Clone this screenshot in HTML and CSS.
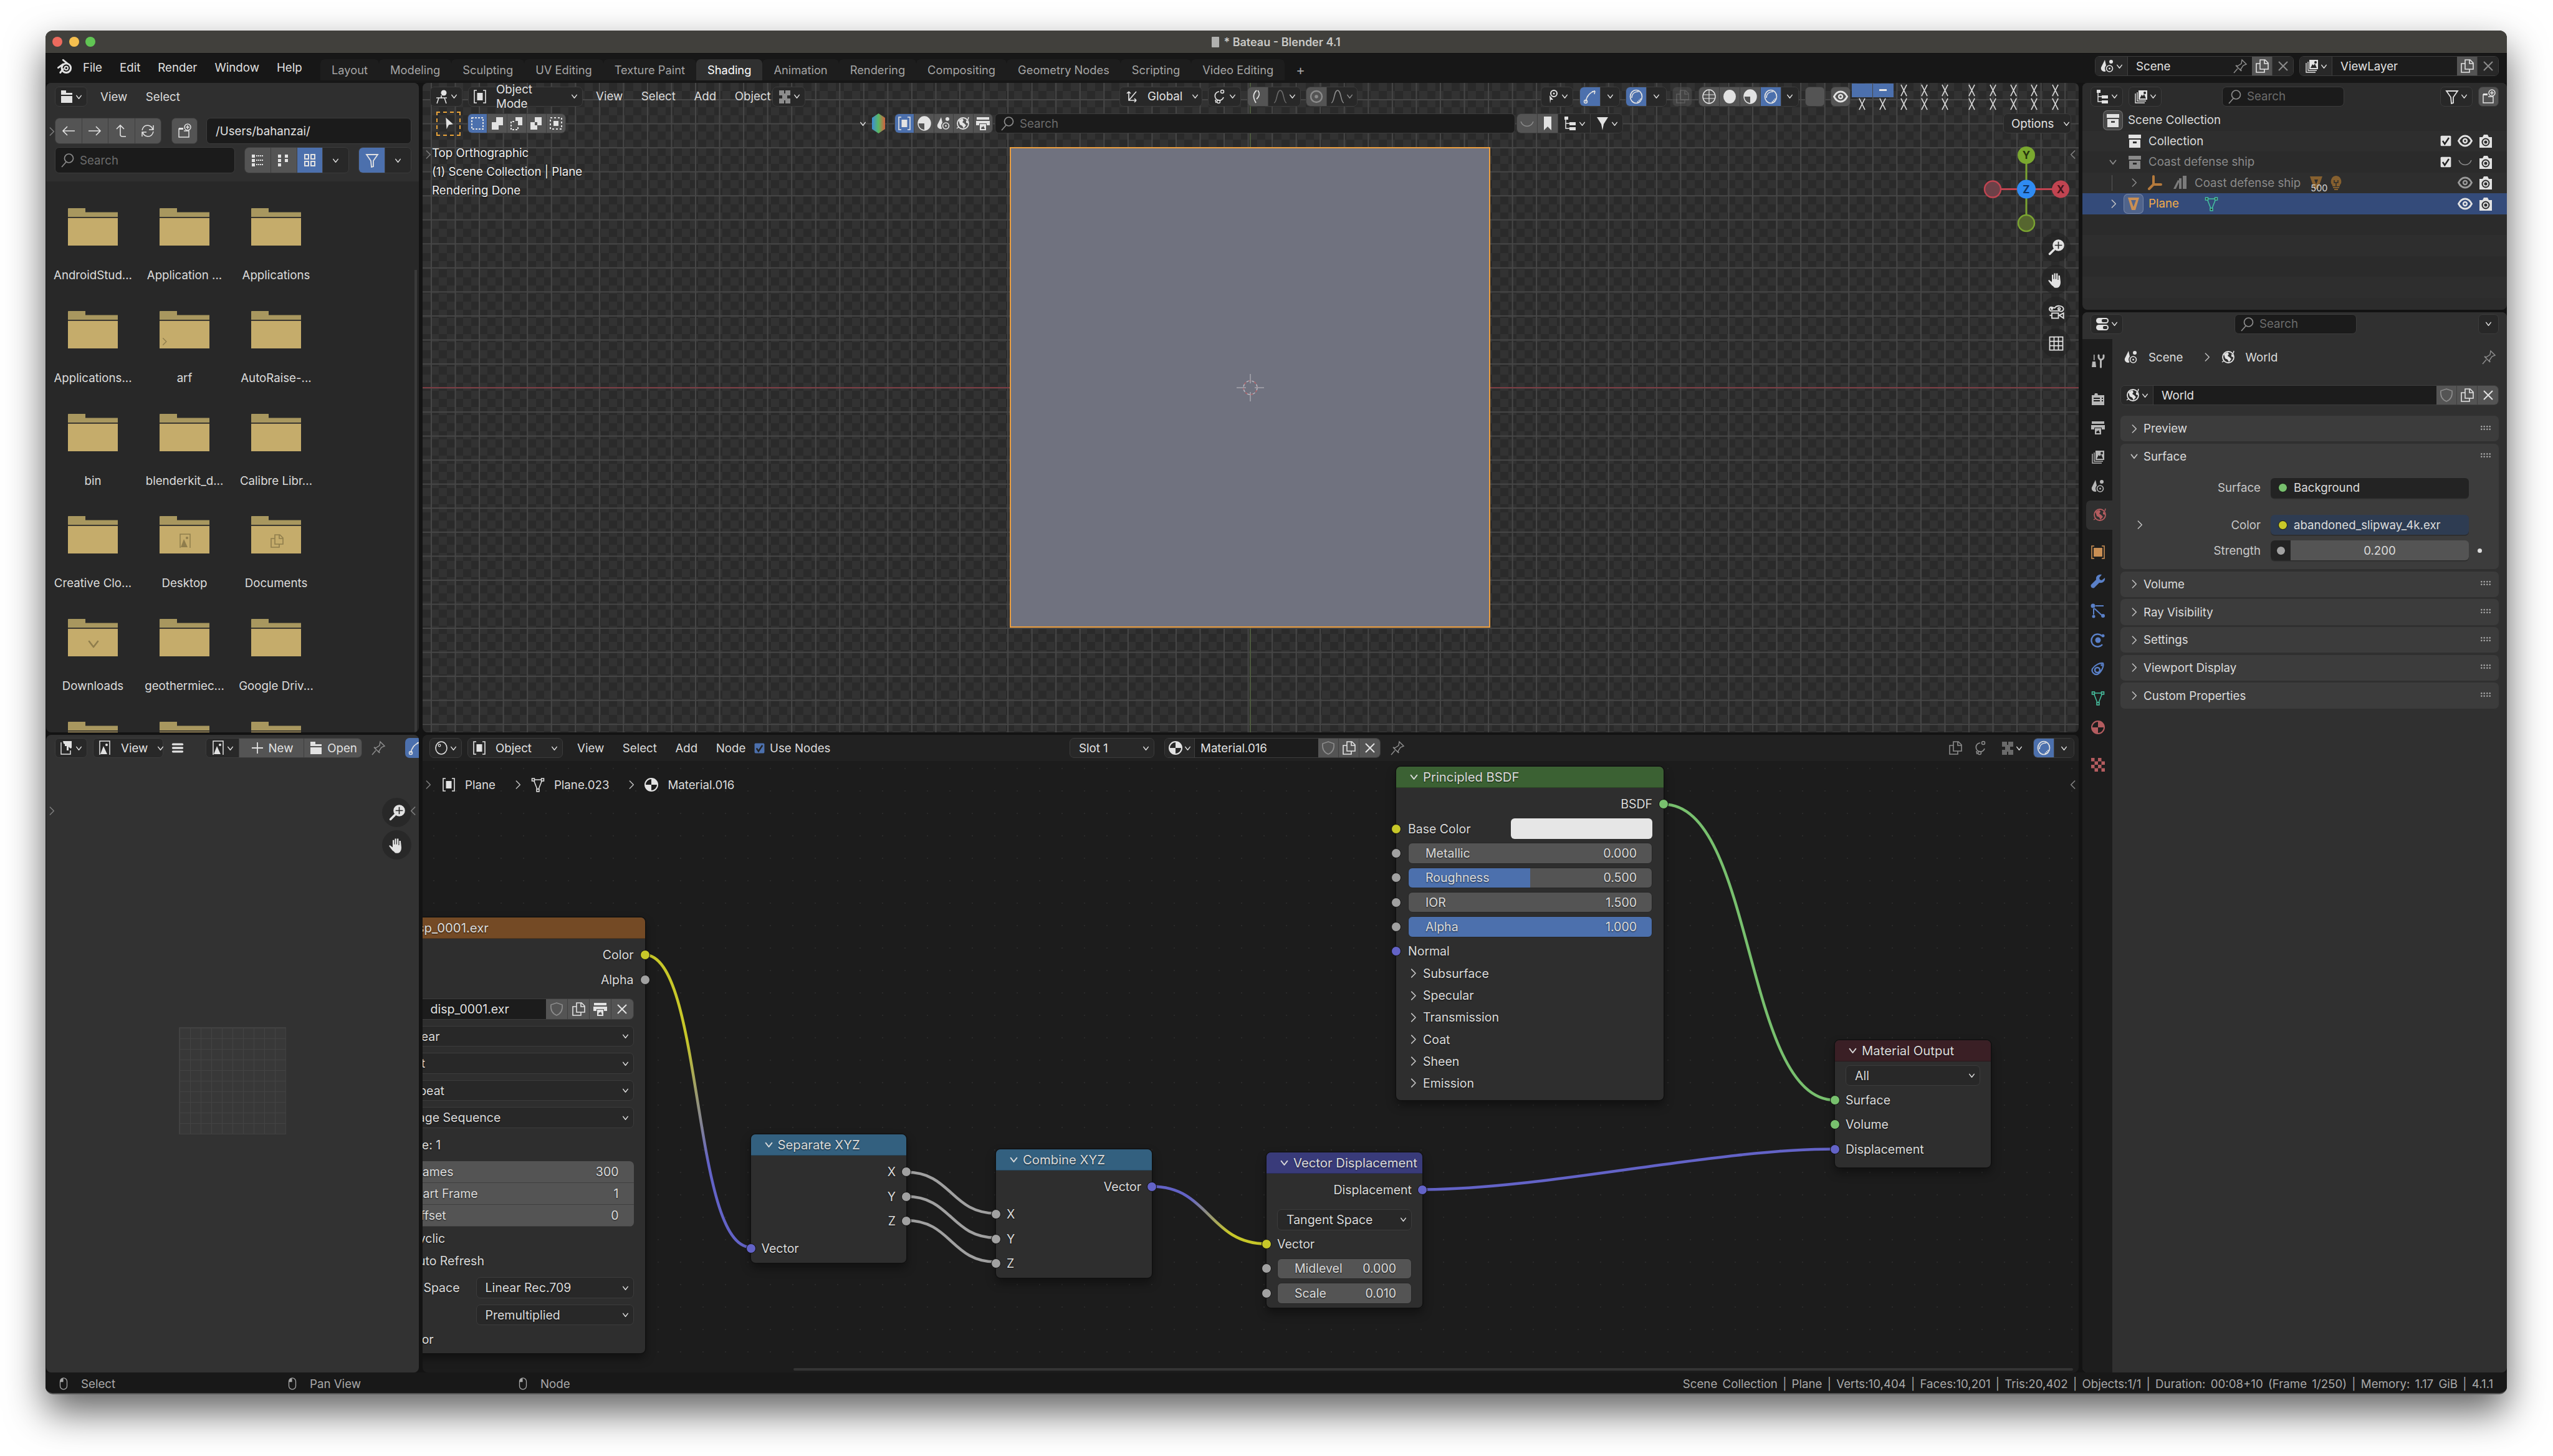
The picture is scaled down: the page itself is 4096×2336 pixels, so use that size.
FILE: index.html
```html
<!DOCTYPE html>
<html lang="en">

<head>
    <meta charset="UTF-8">
    <title>* Bateau - Blender 4.1</title>
    <link rel="stylesheet" href="styles.css">
</head>

<body>
    <!-- icon set -->
    <svg class="defs" aria-hidden="true">
        <symbol id="chd" viewBox="0 0 24 24"><path d="M5 8l7 9 7-9" fill="none" stroke="currentColor" stroke-width="2.6" stroke-linecap="round" stroke-linejoin="round"/></symbol>
        <symbol id="chr" viewBox="0 0 24 24"><path d="M8 3l9 9-9 9" fill="none" stroke="currentColor" stroke-width="2.2" stroke-linecap="round" stroke-linejoin="round"/></symbol>
        <symbol id="chl" viewBox="0 0 24 24"><path d="M16 3l-9 9 9 9" fill="none" stroke="currentColor" stroke-width="2.6" stroke-linecap="round" stroke-linejoin="round"/></symbol>
        <symbol id="logo" viewBox="0 0 24 24"><g fill="none" stroke="currentColor"><circle cx="14.5" cy="13.5" r="6.5" stroke-width="2.6"/><circle cx="14.5" cy="13.5" r="2.4" stroke-width="1.8"/><path d="M3 13l7-5M10 2l6 5M6 20l4-5" stroke-width="2.6" stroke-linecap="round"/></g></symbol>
        <symbol id="folder" viewBox="0 0 24 24"><path fill="currentColor" d="M3 2h8v4h10v3H3zM3 11h18v11H3z"/></symbol>
        <symbol id="view3d" viewBox="0 0 24 24"><circle cx="15" cy="6" r="4.5" fill="currentColor"/><path d="M3 14h17M7 14l-3 9M16 14l3 9M11 10v5" fill="none" stroke="currentColor" stroke-width="1.6"/></symbol>
        <symbol id="objm" viewBox="0 0 24 24"><path d="M7 2H3v20h4M17 2h4v20h-4" fill="none" stroke="currentColor" stroke-width="1.6"/><rect x="7.5" y="6" width="9" height="12" fill="currentColor"/></symbol>
        <symbol id="arl" viewBox="0 0 24 24"><path d="M22 12H3M10 5l-7 7 7 7" fill="none" stroke="currentColor" stroke-width="1.6"/></symbol>
        <symbol id="arr" viewBox="0 0 24 24"><path d="M2 12h19M14 5l7 7-7 7" fill="none" stroke="currentColor" stroke-width="1.6"/></symbol>
        <symbol id="aru" viewBox="0 0 24 24"><path d="M10 3v15c0 3 2 3 4 3h5M4 9l6-6 6 6" fill="none" stroke="currentColor" stroke-width="1.6"/></symbol>
        <symbol id="refr" viewBox="0 0 24 24"><path d="M20 10A8.5 8.5 0 0 0 4 8l-1 3M4 14a8.500 8.500 0 0 0 16 2l1-3M14 10h7V3M10 14H3v7" fill="none" stroke="currentColor" stroke-width="1.5"/></symbol>
        <symbol id="newf" viewBox="0 0 24 24"><path d="M3 8h6M3 8v14h16V12H11" fill="none" stroke="currentColor" stroke-width="1.5"/><rect x="3" y="7" width="7" height="3" fill="currentColor"/><circle cx="17" cy="6" r="5" fill="none" stroke="currentColor" stroke-width="1.5"/><path d="M17 3v6M14 6h6" stroke="currentColor" stroke-width="1.6"/></symbol>
        <symbol id="search" viewBox="0 0 24 24"><circle cx="14.500" cy="9" r="7" fill="none" stroke="currentColor" stroke-width="1.7"/><path d="M10 15l-7 8" stroke="currentColor" stroke-width="1.7"/></symbol>
        <symbol id="lists" viewBox="0 0 24 24"><g fill="currentColor"><rect x="3" y="3" width="5" height="5"/><rect x="3" y="10" width="5" height="5"/><rect x="3" y="17" width="5" height="5"/></g><path d="M10 5h12M10 12h12M10 19h12" stroke="currentColor" stroke-width="2" stroke-dasharray="2 1"/></symbol>
        <symbol id="listl" viewBox="0 0 24 24"><g fill="currentColor"><rect x="3" y="3" width="5" height="5"/><rect x="3" y="10" width="5" height="5"/><rect x="3" y="17" width="5" height="5"/><rect x="14" y="3" width="5" height="5"/><rect x="14" y="10" width="5" height="5"/></g><path d="M9.500 5v0M9.500 12v0" stroke="currentColor" stroke-width="2"/></symbol>
        <symbol id="thumbs" viewBox="0 0 24 24"><g fill="none" stroke="currentColor" stroke-width="2"><rect x="4" y="3" width="6" height="7"/><rect x="14" y="3" width="6" height="7"/><rect x="4" y="14" width="6" height="7"/><rect x="14" y="14" width="6" height="7"/></g></symbol>
        <symbol id="filter" viewBox="0 0 24 24"><path d="M3 3h18l-7 10v9l-3 1-1-10z" fill="none" stroke="currentColor" stroke-width="1.8"/></symbol>
        <symbol id="filterf" viewBox="0 0 24 24"><path d="M3 2h18l-7 11-2 10-2-10z" fill="currentColor"/></symbol>
        <symbol id="scene" viewBox="0 0 24 24"><path fill="currentColor" d="M8 2L2 14c-1 4 2 7 6 7l1.500-1c-2-3-2-6 .5-9z"/><circle cx="18" cy="5" r="3" fill="currentColor"/><circle cx="15.500" cy="16" r="5" fill="none" stroke="currentColor" stroke-width="1.6"/><circle cx="15.500" cy="16" r="1.400" fill="currentColor"/></symbol>
        <symbol id="layers" viewBox="0 0 24 24"><path d="M3 7v15h15M6 5v14h14" fill="none" stroke="currentColor" stroke-width="1.4"/><path fill="currentColor" d="M8 2h14v15H8zM10 15h10l-3-7-2 3-2-2z" fill-rule="evenodd"/><circle cx="18" cy="6" r="2" fill="#222"/></symbol>
        <symbol id="pin" viewBox="0 0 24 24"><path d="M15 2l7 7-5 2-4 6 1 3-9-9 3 1 6-4zM8 16l-6 7" fill="none" stroke="currentColor" stroke-width="1.500"/></symbol>
        <symbol id="copy" viewBox="0 0 24 24"><path d="M9 2h8l5 5v10H9zM16 2v6h6M9 8H3v14h13v-5" fill="none" stroke="currentColor" stroke-width="1.600"/></symbol>
        <symbol id="x" viewBox="0 0 24 24"><path d="M5 5l14 14M19 5L5 19" fill="none" stroke="currentColor" stroke-width="2"/></symbol>
        <symbol id="xt" viewBox="0 0 24 24"><path d="M7 2l10 20M17 2L7 22" fill="none" stroke="currentColor" stroke-width="1.800"/></symbol>
        <symbol id="tree" viewBox="0 0 24 24"><g fill="currentColor"><rect x="3" y="1" width="6" height="5"/><rect x="11" y="10" width="10" height="5"/><rect x="11" y="18" width="10" height="5"/></g><path d="M5 6v14h6M5 12h6" fill="none" stroke="currentColor" stroke-width="1.500"/></symbol>
        <symbol id="coll" viewBox="0 0 24 24"><path fill="currentColor" fill-rule="evenodd" d="M2 2h20v6H2zM3 10h18v13H3zM9 13v3h6v-3z"/></symbol>
        <symbol id="check" viewBox="0 0 24 24"><rect x="2" y="2" width="20" height="20" rx="2" fill="currentColor"/><path d="M6 12l4 6 8-12" fill="none" stroke="#222" stroke-width="3"/></symbol>
        <symbol id="eye" viewBox="0 0 24 24"><path d="M1.500 12C5 5 9 4 12 4s7 1 10.500 8C19 19 15 20 12 20s-7-1-10.500-8z" fill="none" stroke="currentColor" stroke-width="2.800"/><circle cx="12" cy="12" r="3" fill="none" stroke="currentColor" stroke-width="2.400"/></symbol>
        <symbol id="eyeo" viewBox="0 0 24 24"><path d="M2 9c4 10 16 10 20 0" fill="none" stroke="currentColor" stroke-width="1.500"/></symbol>
        <symbol id="cam" viewBox="0 0 24 24"><path fill="currentColor" d="M2 6h5l2-4h6l2 4h5v17H2z"/><circle cx="12" cy="14" r="6.500" fill="#2c2c2c"/><circle cx="12" cy="14" r="4.500" fill="currentColor"/><circle cx="12" cy="14" r="2.500" fill="#2c2c2c"/></symbol>
        <symbol id="empty" viewBox="0 0 24 24"><path d="M10 2v13M10 15l-7 7M10 15h12" fill="none" stroke="currentColor" stroke-width="4" stroke-linecap="round"/></symbol>
        <symbol id="book" viewBox="0 0 24 24"><path fill="currentColor" d="M1 22L8 8l3 1-6 13zM10 22V5h4v17zM16 22V1h6v21z"/></symbol>
        <symbol id="mesh" viewBox="0 0 24 24"><path d="M5 4h14l-7 18z" fill="none" stroke="currentColor" stroke-width="1.500"/><g fill="#2c2c2c" stroke="currentColor" stroke-width="1.500"><rect x="2.500" y="2" width="4" height="4"/><rect x="17.500" y="2" width="4" height="4"/><rect x="10" y="19" width="4" height="4"/></g></symbol>
        <symbol id="meshb" viewBox="0 0 24 24"><path fill="currentColor" fill-rule="evenodd" d="M2 2h20l-7 20H9zM9 7l3 8 3-8z"/></symbol>
        <symbol id="lamp" viewBox="0 0 24 24"><path fill="currentColor" d="M12 1a9 9 0 0 1 6 15v2H6v-2a9 9 0 0 1 6-15zM7 19h10v2H7zM9 22h6v2H9z"/><path d="M9 8v4h6V8M12 12v6" fill="none" stroke="#2c2c2c" stroke-width="1.500"/></symbol>
        <symbol id="planeo" viewBox="0 0 24 24"><path fill="currentColor" fill-rule="evenodd" d="M3 2h18l-6 20H9zM8 6l4 11 4-11z"/></symbol>
        <symbol id="toggle" viewBox="0 0 24 24"><rect x="2" y="2" width="20" height="9" rx="4.500" fill="currentColor"/><rect x="11" y="4" width="9" height="5" rx="2" fill="#2c2c2c"/><rect x="2" y="13" width="20" height="9" rx="4.500" fill="currentColor"/><rect x="13" y="15" width="7" height="5" rx="2" fill="#2c2c2c"/></symbol>
        <symbol id="tool" viewBox="0 0 24 24"><path fill="currentColor" d="M5 2h1.500v9H5zM3 13h5l1 9H2z"/><path d="M13 3v3c0 3 3 4 3.500 4v12M21 3v3c0 3-3 4-4 4" fill="none" stroke="currentColor" stroke-width="3" stroke-linecap="round"/></symbol>
        <symbol id="render" viewBox="0 0 24 24"><path fill="currentColor" fill-rule="evenodd" d="M2 7h4l1-3h4l1 3h10v16H2zM5 11v2h10v-2zM5 15v2h10v-2zM18 11v2h2v-2zM18 15v2h2v-2z"/></symbol>
        <symbol id="output" viewBox="0 0 24 24"><path fill="currentColor" fill-rule="evenodd" d="M2 2h20v4H2zM1 8h22v7h-5v-3H6v3H1zM7 13h10v10H7zM9 21h6l-2-5-2 2-1-1z"/></symbol>
        <symbol id="world" viewBox="0 0 24 24"><circle cx="12" cy="12" r="9" fill="none" stroke="currentColor" stroke-width="1.800"/><path fill="currentColor" d="M5 7l6-3 2 3-2 3 3 2 3 3-4 5-2-4-4-2zM17 7l3 2 0 3-3-1z"/><path d="M2 20l3-2M21 2l-1 4" fill="none" stroke="currentColor" stroke-width="1.500"/></symbol>
        <symbol id="objt" viewBox="0 0 24 24"><path d="M6 2H2v20h4M18 2h4v20h-4" fill="none" stroke="currentColor" stroke-width="1.600"/><rect x="5" y="5" width="14" height="14" fill="currentColor"/></symbol>
        <symbol id="wrench" viewBox="0 0 24 24"><path fill="currentColor" d="M23 6l-5 4-3-1-1-3 4-5c-5-1-10 2-9 8L1 17c-2 3 2 7 5 5l8-8c6 1 10-3 9-8z"/></symbol>
        <symbol id="part" viewBox="0 0 24 24"><g fill="currentColor"><circle cx="4" cy="4" r="3.500"/><circle cx="20" cy="20" r="3"/><circle cx="5" cy="21" r="2.500"/></g><path d="M8 4h13M6 8l12 11M5 8v10" fill="none" stroke="currentColor" stroke-width="2"/></symbol>
        <symbol id="phys" viewBox="0 0 24 24"><path d="M19 19a10 10 0 1 1-1-14" fill="none" stroke="currentColor" stroke-width="2.400"/><circle cx="12" cy="12" r="4.500" fill="currentColor"/><circle cx="20" cy="5" r="2.500" fill="currentColor"/></symbol>
        <symbol id="constr" viewBox="0 0 24 24"><path d="M3 12c4-6 12-10 17-9 2 5-3 15-9 18-5 1-10-4-8-9z" fill="none" stroke="currentColor" stroke-width="2.200"/><circle cx="11" cy="14" r="4" fill="none" stroke="currentColor" stroke-width="2.600"/><circle cx="18" cy="6" r="1.800" fill="currentColor"/></symbol>
        <symbol id="matt" viewBox="0 0 24 24"><path fill="currentColor" fill-rule="evenodd" d="M12 1a11 11 0 1 1 0 22 11 11 0 0 1 0-22zM12 12V3a9 9 0 0 0-9 9zM12 12v9a9 9 0 0 0 9-9z"/></symbol>
        <symbol id="tex" viewBox="0 0 24 24"><path fill="currentColor" d="M1 1h5.500v5.500H1zM12 1h5.500v5.500H12zM6.500 6.500H12V12H6.500zM17.500 6.500H23V12h-5.500zM1 12h5.500v5.500H1zM12 12h5.500v5.500H12zM6.500 17.500H12V23H6.500zM17.500 17.500H23V23h-5.500z"/></symbol>
        <symbol id="shield" viewBox="0 0 24 24"><path d="M12 2l9 3c1 8-2 14-9 17C5 19 2 13 3 5z" fill="none" stroke="currentColor" stroke-width="1.600"/></symbol>
        <symbol id="image" viewBox="0 0 24 24"><path d="M4 23V1h16v22" fill="none" stroke="currentColor" stroke-width="1.500"/><path fill="currentColor" d="M5 22l5-13 6 13z"/><circle cx="15" cy="7" r="2" fill="currentColor"/></symbol>
        <symbol id="plus" viewBox="0 0 24 24"><path d="M12 3v18M3 12h18" stroke="currentColor" stroke-width="1.800"/></symbol>
        <symbol id="burger" viewBox="0 0 24 24"><g fill="currentColor"><rect x="1" y="3" width="22" height="4" rx="2"/><rect x="1" y="10" width="22" height="4" rx="2"/><rect x="1" y="17" width="22" height="4" rx="2"/></g></symbol>
        <symbol id="paint" viewBox="0 0 24 24"><path d="M3 3v19h15v-6" fill="none" stroke="currentColor" stroke-width="1.500"/><path fill="currentColor" d="M6 1h14v10c0 2-2 2-3 1l-2-2v6h-3V9H9V6L7 5z"/></symbol>
        <symbol id="curve" viewBox="0 0 24 24"><path d="M5 20C7 10 12 5 20 3M20 3l-5 1M20 3l-1 5" fill="none" stroke="currentColor" stroke-width="1.600"/><circle cx="5" cy="20" r="2.500" fill="none" stroke="currentColor" stroke-width="1.500"/></symbol>
        <symbol id="ballo" viewBox="0 0 24 24"><ellipse cx="12" cy="12" rx="9" ry="10" fill="none" stroke="currentColor" stroke-width="1.600"/><circle cx="9" cy="8" r="1.800" fill="none" stroke="currentColor" stroke-width="1.200"/></symbol>
        <symbol id="zoomp" viewBox="0 0 24 24"><path fill="currentColor" fill-rule="evenodd" d="M15 1a8 8 0 1 1-8 8 8 8 0 0 1 8-8zM14.300 4v4.300H10v1.400h4.300V14h1.400V9.700H20V8.300h-4.300V4z"/><path d="M9 15l-6 6" stroke="currentColor" stroke-width="3" stroke-linecap="round"/></symbol>
        <symbol id="hand" viewBox="0 0 24 24"><path fill="currentColor" d="M8 21c-3-2-5-5-7-8l1-1 4 3V5h2v6h1V3h2v8h1V3h2v9h1V6h2l1 9c0 5-2 8-6 8-2 0-3 0-4-2z"/></symbol>
        <symbol id="fly" viewBox="0 0 24 24"><g fill="none" stroke="currentColor" stroke-width="1.600"><path d="M4 11c-3-2-1-6 2-5 1 0 3 1 4 1 2-4 11-4 12 1 0 4-4 4-6 3z"/><circle cx="6" cy="8" r="1"/><circle cx="16" cy="8" r="1.500"/><rect x="6" y="14" width="9" height="7"/><path d="M6 17H3M16 17l6-3v7z"/></g></symbol>
        <symbol id="grid" viewBox="0 0 24 24"><path d="M3 3h18v18H3zM9 3v18M15 3v18M3 9h18M3 15h18" fill="none" stroke="currentColor" stroke-width="1.500"/></symbol>
        <symbol id="bookm" viewBox="0 0 24 24"><path fill="currentColor" d="M6 1h12v22l-6-6-6 6z"/></symbol>
        <symbol id="tog" viewBox="0 0 24 24"><path fill="currentColor" d="M3 2h8v5h2V2h8v8h-5v5h5v8h-8v-5h-2v5H3v-8h5v-5H3z"/></symbol>
        <symbol id="mouse" viewBox="0 0 24 24"><rect x="6" y="2" width="12" height="20" rx="6" fill="none" stroke="currentColor" stroke-width="1.400"/><path fill="currentColor" d="M6.500 9V8a5.500 5.500 0 0 1 5-5.500V9z"/></symbol>
        <symbol id="snap" viewBox="0 0 24 24"><path d="M10 2C4 8 4 13 9 22M12 2c4 5 3 9-2 14" fill="none" stroke="currentColor" stroke-width="1.800"/></symbol>
        <symbol id="pivot" viewBox="0 0 24 24"><path d="M17 13a7 7 0 1 1-7-9M4 17l1 5" fill="none" stroke="currentColor" stroke-width="1.700"/><circle cx="9" cy="20" r="2.500" fill="none" stroke="currentColor" stroke-width="1.500"/><circle cx="15" cy="4" r="2.500" fill="none" stroke="currentColor" stroke-width="1.500"/></symbol>
        <symbol id="glob" viewBox="0 0 24 24"><path d="M8 4v14h12M8 4l-3 3M8 4l3 3M20 18l-3-3M20 18l-3 3M8 18l12-14" fill="none" stroke="currentColor" stroke-width="1.700"/></symbol>
        <symbol id="sharp" viewBox="0 0 24 24"><path d="M2 22c5 0 4-20 10-20s5 20 10 20" fill="none" stroke="currentColor" stroke-width="1.600"/></symbol>
        <symbol id="ring" viewBox="0 0 24 24"><circle cx="12" cy="12" r="9" fill="none" stroke="currentColor" stroke-width="2.400"/><circle cx="12" cy="12" r="2.800" fill="currentColor"/></symbol>
        <symbol id="pick" viewBox="0 0 24 24"><circle cx="14" cy="7" r="5" fill="none" stroke="currentColor" stroke-width="2"/><circle cx="14" cy="7" r="1.500" fill="currentColor"/><path fill="currentColor" d="M7 10l6 7-4 0-1 6z"/></symbol>
        <symbol id="shadew" viewBox="0 0 24 24"><ellipse cx="12" cy="12" rx="10" ry="11" fill="none" stroke="currentColor" stroke-width="1.500"/><path d="M2 9h20M2 15h20M12 1v22" fill="none" stroke="currentColor" stroke-width="1.200"/></symbol>
        <symbol id="shades" viewBox="0 0 24 24"><ellipse cx="12" cy="12" rx="10" ry="11" fill="currentColor"/></symbol>
        <symbol id="shadem" viewBox="0 0 24 24"><path fill="currentColor" d="M12 1C6 1 2 6 2 12h10v11c6 0 10-5 10-11S18 1 12 1z"/><ellipse cx="12" cy="12" rx="10" ry="11" fill="none" stroke="currentColor" stroke-width="1.500"/></symbol>
        <symbol id="shader" viewBox="0 0 24 24"><ellipse cx="12" cy="12" rx="9.500" ry="10.500" fill="none" stroke="currentColor" stroke-width="1.700"/><path d="M5 14c0-6 4-10 11-10" fill="none" stroke="currentColor" stroke-width="1.600"/><path d="M14 21l6-6" fill="none" stroke="currentColor" stroke-width="1.800" stroke-dasharray="2 1"/></symbol>
        <symbol id="cursor" viewBox="0 0 24 24"><path fill="currentColor" d="M8 4l10 9-6 1-3 6z"/></symbol>
        <symbol id="selr" viewBox="0 0 24 24"><rect x="3" y="3" width="18" height="18" fill="none" stroke="currentColor" stroke-width="2" stroke-dasharray="3 2"/></symbol>
        <symbol id="sela" viewBox="0 0 24 24"><path fill="currentColor" d="M10 2h11v13H14v7H3V10h7z"/></symbol>
        <symbol id="selb" viewBox="0 0 24 24"><path fill="currentColor" d="M10 2h11v13H14V8h-4z"/><path d="M8 9H3v13h11v-5" fill="none" stroke="currentColor" stroke-width="2" stroke-dasharray="3 2"/></symbol>
        <symbol id="selc" viewBox="0 0 24 24"><path fill="currentColor" fill-rule="evenodd" d="M10 2h11v13H14v7H3V10h7zM10 10v5h4v-5z"/></symbol>
        <symbol id="seld" viewBox="0 0 24 24"><rect x="3" y="3" width="18" height="18" fill="none" stroke="currentColor" stroke-width="2" stroke-dasharray="3 3"/><rect x="8" y="8" width="8" height="8" fill="currentColor"/></symbol>
        <symbol id="fld" viewBox="0 0 80 60"><path fill="#a8975f" d="M0 1a1 1 0 0 1 1-1h27v6.500h52V14H0z"/><path fill="#c5ac6b" d="M0 15.700h80V60H0z"/></symbol>
    </svg>

    <div class="window">
        <div class="titlebar">
            <span class="light red"></span><span class="light yellow"></span><span class="light green"></span>
            <div class="title">
                <span class="doc"></span>
                <span>* Bateau - Blender 4.1</span>
            </div>
        </div>

        <div class="topbar">
            <svg class="ic logo"><use href="#logo"/></svg>
            <div class="main-menu">
                <span>File</span><span>Edit</span><span>Render</span><span>Window</span><span>Help</span>
            </div>
            <div class="tabs">
                <span class="tab">Layout</span>
                <span class="tab">Modeling</span>
                <span class="tab">Sculpting</span>
                <span class="tab">UV Editing</span>
                <span class="tab">Texture Paint</span>
                <span class="tab active">Shading</span>
                <span class="tab">Animation</span>
                <span class="tab">Rendering</span>
                <span class="tab">Compositing</span>
                <span class="tab">Geometry Nodes</span>
                <span class="tab">Scripting</span>
                <span class="tab">Video Editing</span>
                <span class="tab add">+</span>
            </div>
            <div class="scene-pickers">
                <div class="g w319">
                    <span class="c d w52"><svg class="ic"><use href="#scene"/></svg><svg class="ic chev"><use href="#chd"/></svg></span>
                    <span class="field">Scene<svg class="ic dim pin-r"><use href="#pin"/></svg></span>
                    <span class="c w33"><svg class="ic"><use href="#copy"/></svg></span>
                    <span class="c d w33"><svg class="ic dim"><use href="#x"/></svg></span>
                </div>
                <div class="g w320">
                    <span class="c d w52"><svg class="ic"><use href="#layers"/></svg><svg class="ic chev"><use href="#chd"/></svg></span>
                    <span class="field">ViewLayer</span>
                    <span class="c w33"><svg class="ic"><use href="#copy"/></svg></span>
                    <span class="c d w33"><svg class="ic dim"><use href="#x"/></svg></span>
                </div>
            </div>
        </div>

        <div class="areas">
            <!-- file browser -->
            <section class="area files">
                <div class="fb-head">
                    <div class="fb-row">
                        <span class="b w52"><svg class="ic"><use href="#folder"/></svg><svg class="ic chev"><use href="#chd"/></svg></span>
                        <div class="menu fb-menu"><span>View</span><span>Select</span></div>
                    </div>
                    <div class="fb-row tall">
                        <div class="g w171 tall">
                            <span class="c grow"><svg class="ic"><use href="#arl"/></svg></span>
                            <span class="c grow"><svg class="ic"><use href="#arr"/></svg></span>
                            <span class="c grow"><svg class="ic"><use href="#aru"/></svg></span>
                            <span class="c grow"><svg class="ic"><use href="#refr"/></svg></span>
                        </div>
                        <span class="b tall tgl w42 ml16"><svg class="ic"><use href="#newf"/></svg></span>
                        <span class="input tall ml14 grow">/Users/bahanzai/</span>
                    </div>
                    <div class="fb-row tall">
                        <span class="input tall search w289"><svg class="ic dim"><use href="#search"/></svg><span class="ph">Search</span></span>
                        <div class="g w168 tall ml15">
                            <span class="c grow"><svg class="ic"><use href="#lists"/></svg></span>
                            <span class="c grow"><svg class="ic"><use href="#listl"/></svg></span>
                            <span class="c on grow"><svg class="ic"><use href="#thumbs"/></svg></span>
                            <span class="c d grow"><svg class="ic chev"><use href="#chd"/></svg></span>
                        </div>
                        <div class="g w85 tall ml15">
                            <span class="c on grow"><svg class="ic"><use href="#filter"/></svg></span>
                            <span class="c d grow"><svg class="ic chev"><use href="#chd"/></svg></span>
                        </div>
                    </div>
                </div>
                <div class="folders">
                    <div class="folder"><svg class="fld"><use href="#fld"/></svg><span>AndroidStud...</span></div>
                    <div class="folder"><svg class="fld"><use href="#fld"/></svg><span>Application ...</span></div>
                    <div class="folder"><svg class="fld"><use href="#fld"/></svg><span>Applications</span></div>
                    <div class="folder"><svg class="fld"><use href="#fld"/></svg><span>Applications...</span></div>
                    <div class="folder"><svg class="fld"><use href="#fld"/></svg><svg class="ic mark corner"><use href="#chr"/></svg><span>arf</span></div>
                    <div class="folder"><svg class="fld"><use href="#fld"/></svg><span>AutoRaise-...</span></div>
                    <div class="folder"><svg class="fld"><use href="#fld"/></svg><span>bin</span></div>
                    <div class="folder"><svg class="fld"><use href="#fld"/></svg><span>blenderkit_d...</span></div>
                    <div class="folder"><svg class="fld"><use href="#fld"/></svg><span>Calibre Libr...</span></div>
                    <div class="folder"><svg class="fld"><use href="#fld"/></svg><span>Creative Clo...</span></div>
                    <div class="folder"><svg class="fld"><use href="#fld"/></svg><svg class="ic mark"><use href="#image"/></svg><span>Desktop</span></div>
                    <div class="folder"><svg class="fld"><use href="#fld"/></svg><svg class="ic mark"><use href="#copy"/></svg><span>Documents</span></div>
                    <div class="folder"><svg class="fld"><use href="#fld"/></svg><svg class="ic mark"><use href="#chd"/></svg><span>Downloads</span></div>
                    <div class="folder"><svg class="fld"><use href="#fld"/></svg><span>geothermiec...</span></div>
                    <div class="folder"><svg class="fld"><use href="#fld"/></svg><span>Google Driv...</span></div>
                    <div class="folder"><svg class="fld"><use href="#fld"/></svg></div>
                    <div class="folder"><svg class="fld"><use href="#fld"/></svg></div>
                    <div class="folder"><svg class="fld"><use href="#fld"/></svg></div>
                </div>
                <span class="vscroll"></span>
                <svg class="ic edge-l fb-edge"><use href="#chr"/></svg>
            </section>

            <!-- 3d viewport -->
            <section class="area viewport">
                <div class="vp-axis-x"></div>
                <div class="vp-axis-y"></div>
                <div class="plane"></div>
                <svg class="cursor3d" viewBox="0 0 50 50">
                    <circle cx="25" cy="25" r="11" fill="none" stroke="#b9b9c2" stroke-width="1.500" stroke-dasharray="5 4"/>
                    <circle cx="25" cy="25" r="11" fill="none" stroke="#b0636a" stroke-width="1.500" stroke-dasharray="4 5" stroke-dashoffset="5"/>
                    <path d="M25 3v15M25 32v15M3 25h15M32 25h15" stroke="#a6a6ae" stroke-width="1.500"/>
                </svg>

                <div class="vp-row first">
                    <span class="b w52"><svg class="ic"><use href="#view3d"/></svg><svg class="ic chev"><use href="#chd"/></svg></span>
                    <span class="b w184 ml9 drop"><svg class="ic"><use href="#objm"/></svg><span>Object Mode</span><svg class="ic chev end"><use href="#chd"/></svg></span>
                    <div class="menu vp-menu"><span>View</span><span>Select</span><span>Add</span><span>Object</span></div>
                    <span class="b w53"><svg class="ic dim"><use href="#tog"/></svg><svg class="ic chev"><use href="#chd"/></svg></span>

                    <span class="b w133 ml504 drop"><svg class="ic"><use href="#glob"/></svg><span>Global</span><svg class="ic chev end"><use href="#chd"/></svg></span>
                    <span class="b w53 ml9"><svg class="ic"><use href="#pivot"/></svg><svg class="ic chev"><use href="#chd"/></svg></span>
                    <div class="g w86 ml10">
                        <span class="c w33"><svg class="ic"><use href="#snap"/></svg></span>
                        <span class="c d grow"><svg class="ic dim2"><use href="#sharp"/></svg><svg class="ic chev"><use href="#chd"/></svg></span>
                    </div>
                    <div class="g w83 ml8">
                        <span class="c w33"><svg class="ic dim"><use href="#ring"/></svg></span>
                        <span class="c d grow"><svg class="ic dim"><use href="#sharp"/></svg><svg class="ic chev dim"><use href="#chd"/></svg></span>
                    </div>

                    <span class="b w52 ml294"><svg class="ic"><use href="#pick"/></svg><svg class="ic chev"><use href="#chd"/></svg></span>
                    <div class="g w65 ml10">
                        <span class="c on w33"><svg class="ic"><use href="#curve"/></svg></span>
                        <span class="c d grow"><svg class="ic chev"><use href="#chd"/></svg></span>
                    </div>
                    <div class="g w66 ml9">
                        <span class="c on w33"><svg class="ic"><use href="#shader"/></svg></span>
                        <span class="c d grow"><svg class="ic chev"><use href="#chd"/></svg></span>
                    </div>
                    <span class="b tgl faded w32 ml9"><svg class="ic dim"><use href="#copy"/></svg></span>
                    <div class="g w161 ml10">
                        <span class="c w33"><svg class="ic"><use href="#shadew"/></svg></span>
                        <span class="c w33"><svg class="ic"><use href="#shades"/></svg></span>
                        <span class="c w33"><svg class="ic"><use href="#shadem"/></svg></span>
                        <span class="c on w33"><svg class="ic"><use href="#shader"/></svg></span>
                        <span class="c d grow"><svg class="ic chev"><use href="#chd"/></svg></span>
                    </div>
                    <span class="b tgl w32 ml10 pause"></span>
                    <span class="b tgl w32 ml9"><svg class="ic"><use href="#eye"/></svg></span>
                    <div class="stray ml2">
                        <span class="stray-block"><i></i><i class="minus"></i></span>
                        <svg class="ic"><use href="#xt"/></svg><svg class="ic"><use href="#xt"/></svg><svg class="ic"><use href="#xt"/></svg><svg class="ic gapx"><use href="#xt"/></svg><svg class="ic"><use href="#xt"/></svg><svg class="ic"><use href="#xt"/></svg><svg class="ic"><use href="#xt"/></svg><svg class="ic"><use href="#xt"/></svg>
                        <svg class="ic"><use href="#xt"/></svg><svg class="ic"><use href="#xt"/></svg><svg class="ic"><use href="#xt"/></svg><svg class="ic"><use href="#xt"/></svg><svg class="ic"><use href="#xt"/></svg><svg class="ic gapx"><use href="#xt"/></svg><svg class="ic"><use href="#xt"/></svg><svg class="ic"><use href="#xt"/></svg><svg class="ic"><use href="#xt"/></svg><svg class="ic"><use href="#xt"/></svg>
                    </div>
                </div>

                <div class="vp-row">
                    <span class="tool-active"><svg class="ic"><use href="#cursor"/></svg></span>
                    <div class="g w158 ml11">
                        <span class="c on grow"><svg class="ic"><use href="#selr"/></svg></span>
                        <span class="c grow"><svg class="ic"><use href="#sela"/></svg></span>
                        <span class="c grow"><svg class="ic"><use href="#selb"/></svg></span>
                        <span class="c grow"><svg class="ic"><use href="#selc"/></svg></span>
                        <span class="c grow"><svg class="ic"><use href="#seld"/></svg></span>
                    </div>
                    <svg class="ic chev ml470"><use href="#chd"/></svg>
                    <span class="prism"></span>
                    <div class="g w158 ml15">
                        <span class="c on grow"><svg class="ic"><use href="#objm"/></svg></span>
                        <span class="c grow"><svg class="ic"><use href="#shadem"/></svg></span>
                        <span class="c grow"><svg class="ic"><use href="#scene"/></svg></span>
                        <span class="c grow"><svg class="ic"><use href="#world"/></svg></span>
                        <span class="c grow"><svg class="ic"><use href="#output"/></svg></span>
                    </div>
                    <span class="input search vp-search"><svg class="ic dim"><use href="#search"/></svg><span class="ph">Search</span></span>
                    <div class="g w171 ml2">
                        <span class="c w33"><svg class="ic dim"><use href="#eyeo"/></svg></span>
                        <span class="c w33"><svg class="ic"><use href="#bookm"/></svg></span>
                        <span class="c d grow"><svg class="ic"><use href="#tree"/></svg><svg class="ic chev"><use href="#chd"/></svg></span>
                        <span class="c d grow"><svg class="ic"><use href="#filterf"/></svg><svg class="ic chev"><use href="#chd"/></svg></span>
                    </div>
                    <span class="b w109 drop ml610 plain"><span>Options</span><svg class="ic chev end"><use href="#chd"/></svg></span>
                </div>

                <div class="vp-info">
                    <div>Top Orthographic</div>
                    <div>(1) Scene Collection | Plane</div>
                    <div>Rendering Done</div>
                </div>

                <svg class="gizmo" viewBox="0 0 180 170">
                    <path d="M93 26v109" stroke="#7aa331" stroke-width="3"/>
                    <path d="M39 80.600h109" stroke="#c04451" stroke-width="3"/>
                    <ellipse cx="93" cy="135" rx="13" ry="13" fill="#56662f" stroke="#7aa331" stroke-width="2.500"/>
                    <ellipse cx="39" cy="80.600" rx="13" ry="13" fill="#6d4148" stroke="#c04451" stroke-width="2.500"/>
                    <circle cx="93" cy="26" r="14" fill="#7aa82f"/>
                    <circle cx="148" cy="80.600" r="14" fill="#c04451"/>
                    <circle cx="93" cy="80.600" r="15" fill="#2f8bf2"/>
                    <text x="93" y="32" class="giz-t" fill="#26330e">Y</text>
                    <text x="148" y="86.600" class="giz-t" fill="#44131a">X</text>
                    <text x="93" y="86.600" class="giz-t" fill="#0e3465">Z</text>
                </svg>
                <span class="nav n1"><svg class="ic"><use href="#zoomp"/></svg></span>
                <span class="nav n2"><svg class="ic"><use href="#hand"/></svg></span>
                <span class="nav n3"><svg class="ic"><use href="#fly"/></svg></span>
                <span class="nav n4"><svg class="ic"><use href="#grid"/></svg></span>
                <svg class="ic edge-l vp-edge"><use href="#chr"/></svg>
                <svg class="ic edge-r vp-edge"><use href="#chl"/></svg>
            </section>

            <!-- outliner + properties -->
            <div class="side">
                <section class="area outliner">
                    <div class="ol-head">
                        <span class="b w52"><svg class="ic"><use href="#tree"/></svg><svg class="ic chev"><use href="#chd"/></svg></span>
                        <span class="b w53 ml9"><svg class="ic"><use href="#layers"/></svg><svg class="ic chev"><use href="#chd"/></svg></span>
                        <span class="input search w196 ml97"><svg class="ic dim"><use href="#search"/></svg><span class="ph">Search</span></span>
                        <span class="b w52 ml154"><svg class="ic"><use href="#filter"/></svg><svg class="ic chev"><use href="#chd"/></svg></span>
                        <span class="b tgl w33 ml9"><svg class="ic"><use href="#newf"/></svg></span>
                    </div>
                    <div class="ol-row">
                        <span class="ol-act ol-root"><svg class="ic"><use href="#coll"/></svg></span>
                        <span class="ol-txt t73">Scene Collection</span>
                    </div>
                    <div class="ol-row alt">
                        <svg class="ic ol-i72"><use href="#coll"/></svg>
                        <span class="ol-txt">Collection</span>
                        <div class="ol-end"><svg class="ic ck"><use href="#check"/></svg><svg class="ic"><use href="#eye"/></svg><svg class="ic"><use href="#cam"/></svg></div>
                    </div>
                    <div class="ol-row">
                        <svg class="ic ol-chev dim"><use href="#chd"/></svg>
                        <svg class="ic ol-i13 gray"><use href="#coll"/></svg>
                        <span class="ol-txt off">Coast defense ship</span>
                        <div class="ol-end"><svg class="ic ck"><use href="#check"/></svg><svg class="ic dim"><use href="#eyeo"/></svg><svg class="ic"><use href="#cam"/></svg></div>
                    </div>
                    <div class="ol-row alt">
                        <span class="ol-line"></span>
                        <svg class="ic ol-chev2 dim"><use href="#chr"/></svg>
                        <svg class="ic ol-emp"><use href="#empty"/></svg>
                        <svg class="ic ol-book"><use href="#book"/></svg>
                        <span class="ol-txt off t11">Coast defense ship</span>
                        <span class="ol-kid"><svg class="ic brown"><use href="#meshb"/></svg><em>500</em></span>
                        <svg class="ic brown ol-lamp"><use href="#lamp"/></svg>
                        <div class="ol-end"><svg class="ic dimeye"><use href="#eye"/></svg><svg class="ic"><use href="#cam"/></svg></div>
                    </div>
                    <div class="ol-row sel">
                        <svg class="ic ol-chev3"><use href="#chr"/></svg>
                        <span class="ol-act ol-plane"><svg class="ic orange"><use href="#planeo"/></svg></span>
                        <span class="ol-txt pl">Plane</span>
                        <svg class="ic teal ol-md"><use href="#mesh"/></svg>
                        <div class="ol-end"><svg class="ic"><use href="#eye"/></svg><svg class="ic"><use href="#cam"/></svg></div>
                    </div>
                    <div class="ol-row"></div>
                    <div class="ol-row alt"></div>
                    <div class="ol-row"></div>
                    <div class="ol-row alt"></div>
                </section>

                <section class="area props">
                    <div class="pr-head">
                        <span class="b w52"><svg class="ic"><use href="#toggle"/></svg><svg class="ic chev"><use href="#chd"/></svg></span>
                        <span class="input search w196 ml179"><svg class="ic dim"><use href="#search"/></svg><span class="ph">Search</span></span>
                        <span class="b w33 ml195"><svg class="ic chev"><use href="#chd"/></svg></span>
                    </div>
                    <div class="pr-body">
                        <div class="pr-tabs">
                            <span class="ptab"><svg class="ic gr"><use href="#tool"/></svg></span>
                            <span class="ptab sep"><svg class="ic gr"><use href="#render"/></svg></span>
                            <span class="ptab"><svg class="ic gr"><use href="#output"/></svg></span>
                            <span class="ptab"><svg class="ic gr"><use href="#layers"/></svg></span>
                            <span class="ptab"><svg class="ic gr"><use href="#scene"/></svg></span>
                            <span class="ptab active"><svg class="ic redd"><use href="#world"/></svg></span>
                            <span class="ptab sep"><svg class="ic org"><use href="#objt"/></svg></span>
                            <span class="ptab"><svg class="ic blu"><use href="#wrench"/></svg></span>
                            <span class="ptab"><svg class="ic blu"><use href="#part"/></svg></span>
                            <span class="ptab"><svg class="ic blu"><use href="#phys"/></svg></span>
                            <span class="ptab"><svg class="ic blu"><use href="#constr"/></svg></span>
                            <span class="ptab"><svg class="ic teal"><use href="#mesh"/></svg></span>
                            <span class="ptab"><svg class="ic redd"><use href="#matt"/></svg></span>
                            <span class="ptab sep"><svg class="ic redd"><use href="#tex"/></svg></span>
                        </div>
                        <div class="pr-main">
                            <div class="crumbs">
                                <svg class="ic"><use href="#scene"/></svg><span>Scene</span>
                                <svg class="ic crumb-chev"><use href="#chr"/></svg>
                                <svg class="ic"><use href="#world"/></svg><span>World</span>
                                <svg class="ic dim crumb-pin"><use href="#pin"/></svg>
                            </div>
                            <div class="g world-sel">
                                <span class="c d w52"><svg class="ic"><use href="#world"/></svg><svg class="ic chev"><use href="#chd"/></svg></span>
                                <span class="field">World</span>
                                <span class="c w33"><svg class="ic dim"><use href="#shield"/></svg></span>
                                <span class="c w33"><svg class="ic"><use href="#copy"/></svg></span>
                                <span class="c w33"><svg class="ic"><use href="#x"/></svg></span>
                            </div>
                            <div class="panel"><svg class="ic pchev"><use href="#chr"/></svg>Preview<span class="grip"></span></div>
                            <div class="panel open">
                                <div class="panel-h"><svg class="ic pchev"><use href="#chd"/></svg>Surface<span class="grip"></span></div>
                                <div class="prop p1"><label>Surface</label><span class="pfield"><i class="dot green"></i>Background</span></div>
                                <div class="prop p2"><svg class="ic pchev2"><use href="#chr"/></svg><label>Color</label><span class="pfield linked"><i class="dot yellow"></i>abandoned_slipway_4k.exr</span></div>
                                <div class="prop p3"><label>Strength</label><span class="pfield num"><span class="num-dot"><i class="dot gray"></i></span><span class="num-val">0.200</span></span><i class="anim"></i></div>
                            </div>
                            <div class="panel"><svg class="ic pchev"><use href="#chr"/></svg>Volume<span class="grip"></span></div>
                            <div class="panel"><svg class="ic pchev"><use href="#chr"/></svg>Ray Visibility<span class="grip"></span></div>
                            <div class="panel"><svg class="ic pchev"><use href="#chr"/></svg>Settings<span class="grip"></span></div>
                            <div class="panel"><svg class="ic pchev"><use href="#chr"/></svg>Viewport Display<span class="grip"></span></div>
                            <div class="panel"><svg class="ic pchev"><use href="#chr"/></svg>Custom Properties<span class="grip"></span></div>
                        </div>
                    </div>
                </section>
            </div>

            <!-- image editor -->
            <section class="area image-ed">
                <div class="ed-head">
                    <span class="b w52"><svg class="ic"><use href="#paint"/></svg><svg class="ic chev"><use href="#chd"/></svg></span>
                    <span class="b w113 ml9 drop"><svg class="ic"><use href="#image"/></svg><span>View</span><svg class="ic chev end"><use href="#chd"/></svg></span>
                    <svg class="ic ie-burger"><use href="#burger"/></svg>
                    <div class="g w251 ie-new">
                        <span class="c d w53"><svg class="ic"><use href="#image"/></svg><svg class="ic chev"><use href="#chd"/></svg></span>
                        <span class="c w104"><svg class="ic"><use href="#plus"/></svg>New</span>
                        <span class="c grow"><svg class="ic"><use href="#folder"/></svg>Open</span>
                    </div>
                    <svg class="ic dim ml14"><use href="#pin"/></svg>
                    <span class="c on ie-blue"><svg class="ic"><use href="#curve"/></svg></span>
                </div>
                <div class="ie-canvas"><div class="ie-grid"></div></div>
                <span class="nav ie-n1"><svg class="ic"><use href="#zoomp"/></svg></span>
                <span class="nav ie-n2"><svg class="ic"><use href="#hand"/></svg></span>
                <svg class="ic edge-l ie-edge"><use href="#chr"/></svg>
                <svg class="ic edge-r ie-edge"><use href="#chl"/></svg>
            </section>

            <!-- shader nodes -->
            <section class="area nodes">
                <div class="ed-head">
                    <span class="b w52"><svg class="ic"><use href="#ballo"/></svg><svg class="ic chev"><use href="#chd"/></svg></span>
                    <span class="b w153 ml9 drop"><svg class="ic"><use href="#objm"/></svg><span>Object</span><svg class="ic chev end"><use href="#chd"/></svg></span>
                    <div class="menu ne-menu"><span>View</span><span>Select</span><span>Add</span><span>Node</span></div>
                    <span class="use-nodes"><svg class="ic box"><use href="#check"/></svg>Use Nodes</span>
                    <span class="b w136 drop plain2"><span>Slot 1</span><svg class="ic chev end"><use href="#chd"/></svg></span>
                    <div class="g w347 ml16">
                        <span class="c d w48"><svg class="ic"><use href="#matt"/></svg><svg class="ic chev"><use href="#chd"/></svg></span>
                        <span class="field tight">Material.016</span>
                        <span class="c w33"><svg class="ic dim"><use href="#shield"/></svg></span>
                        <span class="c w33"><svg class="ic"><use href="#copy"/></svg></span>
                        <span class="c w33"><svg class="ic"><use href="#x"/></svg></span>
                    </div>
                    <svg class="ic dim ml15"><use href="#pin"/></svg>
                    <svg class="ic dim ml871"><use href="#copy"/></svg>
                    <svg class="ic dim ml18"><use href="#pivot"/></svg>
                    <svg class="ic dim2 ml18"><use href="#tog"/></svg>
                    <svg class="ic chev"><use href="#chd"/></svg>
                    <div class="g w66 ml16">
                        <span class="c on w33"><svg class="ic"><use href="#shader"/></svg></span>
                        <span class="c d grow"><svg class="ic chev"><use href="#chd"/></svg></span>
                    </div>
                </div>
                <div class="ne-crumbs">
                    <svg class="ic"><use href="#objm"/></svg><span>Plane</span>
                    <svg class="ic crumb-chev"><use href="#chr"/></svg>
                    <svg class="ic"><use href="#mesh"/></svg><span>Plane.023</span>
                    <svg class="ic crumb-chev"><use href="#chr"/></svg>
                    <svg class="ic"><use href="#matt"/></svg><span>Material.016</span>
                </div>

                <svg class="links" width="2657" height="1023">
                    <defs>
                        <linearGradient id="yb" gradientUnits="userSpaceOnUse" x1="356" y1="353" x2="526" y2="822"><stop offset="0.3" stop-color="#c7c729"/><stop offset="0.7" stop-color="#6363c7"/></linearGradient>
                        <linearGradient id="by" gradientUnits="userSpaceOnUse" x1="1170" y1="725" x2="1354" y2="817"><stop offset="0.3" stop-color="#6363c7"/><stop offset="0.7" stop-color="#c7c729"/></linearGradient>
                    </defs>
                    <g fill="none" stroke-width="4.500">
                        <path stroke="url(#yb)" d="M356.500 353C450 353 432 822 526.500 822"/>
                        <path stroke="#a1a1a1" d="M776 701.600C848 701.600 848 767.700 920 767.700"/>
                        <path stroke="#a1a1a1" d="M776 740.600C848 740.600 848 806.800 920 806.800"/>
                        <path stroke="#a1a1a1" d="M776 779C848 779 848 845.600 920 845.600"/>
                        <path stroke="url(#by)" d="M1170 724.600C1262 724.600 1262 816.600 1354 816.600"/>
                        <path stroke="#78c06e" d="M1991 111.500C2138 111.500 2119 586 2266 586"/>
                        <path stroke="#6363c7" d="M1604 729.500C1800 729.500 2070 664.600 2266 664.600"/>
                    </g>
                </svg>

                <div class="node n-image">
                    <div class="nh brown-h"><svg class="ic nchev"><use href="#chd"/></svg>disp_0001.exr</div>
                    <div class="nb">
                        <div class="nr end">Color<i class="sock r yellow"></i></div>
                        <div class="nr end">Alpha<i class="sock r gray"></i></div>
                        <div class="g nr-g mt13">
                            <span class="c d w52"><svg class="ic"><use href="#image"/></svg></span>
                            <span class="field">disp_0001.exr</span>
                            <span class="c w35"><svg class="ic dim"><use href="#shield"/></svg></span>
                            <span class="c w35"><svg class="ic"><use href="#copy"/></svg></span>
                            <span class="c w35"><svg class="ic"><use href="#output"/></svg></span>
                            <span class="c w35"><svg class="ic"><use href="#x"/></svg></span>
                        </div>
                        <div class="nd mt10 pad23">Linear<svg class="ic chev end"><use href="#chd"/></svg></div>
                        <div class="nd mt10 pad23">Flat<svg class="ic chev end"><use href="#chd"/></svg></div>
                        <div class="nd mt10 pad23">Repeat<svg class="ic chev end"><use href="#chd"/></svg></div>
                        <div class="nd mt10 pad23">Image Sequence<svg class="ic chev end"><use href="#chd"/></svg></div>
                        <div class="nr mt10 pad6">Frame: 1</div>
                        <div class="stack mt10">
                            <div class="ns">Frames<b>300</b></div>
                            <div class="ns">Start Frame<b>1</b></div>
                            <div class="ns">Offset<b>0</b></div>
                        </div>
                        <div class="nr mt2 pad33">Cyclic</div>
                        <div class="nr mt2 pad33">Auto Refresh</div>
                        <div class="space-row mt10"><label>Color Space</label><div class="nd w253 in">Linear Rec.709<svg class="ic chev end"><use href="#chd"/></svg></div></div>
                        <div class="space-row mt10"><div class="nd w253 in">Premultiplied<svg class="ic chev end"><use href="#chd"/></svg></div></div>
                        <div class="nr mt6 pad11">Vector</div>
                    </div>
                </div>

                <div class="node n-separate">
                    <div class="nh blue-h"><svg class="ic nchev"><use href="#chd"/></svg>Separate XYZ</div>
                    <div class="nb small">
                        <div class="nr end">X<i class="sock r gray"></i></div>
                        <div class="nr end">Y<i class="sock r gray"></i></div>
                        <div class="nr end">Z<i class="sock r gray"></i></div>
                        <div class="nr mt9"><i class="sock l violet"></i>Vector</div>
                    </div>
                </div>

                <div class="node n-combine">
                    <div class="nh blue-h"><svg class="ic nchev"><use href="#chd"/></svg>Combine XYZ</div>
                    <div class="nb small">
                        <div class="nr end">Vector<i class="sock r violet"></i></div>
                        <div class="nr mt9"><i class="sock l gray"></i>X</div>
                        <div class="nr"><i class="sock l gray"></i>Y</div>
                        <div class="nr"><i class="sock l gray"></i>Z</div>
                    </div>
                </div>

                <div class="node n-vdisp">
                    <div class="nh indigo-h"><svg class="ic nchev"><use href="#chd"/></svg>Vector Displacement</div>
                    <div class="nb small">
                        <div class="nr end">Displacement<i class="sock r violet"></i></div>
                        <div class="nd mt14">Tangent Space<svg class="ic chev end"><use href="#chd"/></svg></div>
                        <div class="nr"><i class="sock l yellow"></i>Vector</div>
                        <div class="ns solo"><i class="sock l gray"></i>Midlevel<b>0.000</b></div>
                        <div class="ns solo"><i class="sock l gray"></i>Scale<b>0.010</b></div>
                    </div>
                </div>

                <div class="node n-principled">
                    <div class="nh green-h"><svg class="ic nchev"><use href="#chd"/></svg>Principled BSDF</div>
                    <div class="nb">
                        <div class="nr end">BSDF<i class="sock r green"></i></div>
                        <div class="nr"><i class="sock l yellow"></i>Base Color<span class="swatch"></span></div>
                        <div class="ns solo"><i class="sock l gray"></i>Metallic<b>0.000</b></div>
                        <div class="ns solo half"><i class="sock l gray"></i>Roughness<b>0.500</b></div>
                        <div class="ns solo"><i class="sock l gray"></i>IOR<b>1.500</b></div>
                        <div class="ns solo full"><i class="sock l gray"></i>Alpha<b>1.000</b></div>
                        <div class="nr"><i class="sock l violet"></i>Normal</div>
                        <div class="np first"><svg class="ic nchev2"><use href="#chr"/></svg>Subsurface</div>
                        <div class="np"><svg class="ic nchev2"><use href="#chr"/></svg>Specular</div>
                        <div class="np"><svg class="ic nchev2"><use href="#chr"/></svg>Transmission</div>
                        <div class="np"><svg class="ic nchev2"><use href="#chr"/></svg>Coat</div>
                        <div class="np"><svg class="ic nchev2"><use href="#chr"/></svg>Sheen</div>
                        <div class="np"><svg class="ic nchev2"><use href="#chr"/></svg>Emission</div>
                    </div>
                </div>

                <div class="node n-output">
                    <div class="nh wine-h"><svg class="ic nchev"><use href="#chd"/></svg>Material Output</div>
                    <div class="nb small">
                        <div class="nd first-d">All<svg class="ic chev end"><use href="#chd"/></svg></div>
                        <div class="nr"><i class="sock l green"></i>Surface</div>
                        <div class="nr"><i class="sock l green"></i>Volume</div>
                        <div class="nr"><i class="sock l violet"></i>Displacement</div>
                    </div>
                </div>

                <span class="hscroll"></span>
                <svg class="ic edge-l ne-edge"><use href="#chr"/></svg>
                <svg class="ic edge-r ne-edge"><use href="#chl"/></svg>
            </section>
        </div>

        <div class="statusbar">
            <span class="st st1"><svg class="ic"><use href="#mouse"/></svg>Select</span>
            <span class="st st2"><svg class="ic"><use href="#mouse"/></svg>Pan View</span>
            <span class="st st3"><svg class="ic"><use href="#mouse"/></svg>Node</span>
            <span class="st-info">Scene Collection | Plane | Verts:10,404 | Faces:10,201 | Tris:20,402 | Objects:1/1 | Duration: 00:08+10 (Frame 1/250) | Memory: 1.17 GiB | 4.1.1</span>
        </div>
    </div>
</body>

</html>
```
FILE: styles.css
```css
html,
body {
    margin: 0;
    width: 4096px;
    height: 2336px;
    overflow: hidden;
    background: #fff;
}

body {
    font-family: Inter, "Liberation Sans", sans-serif;
    font-size: 18.7px;
    color: #dcdcdc;
}

.defs {
    position: absolute;
    width: 0;
    height: 0;
}

.ic {
    display: block;
    flex: none;
    width: 24px;
    height: 24px;
    color: #e2e2e2;
}

.ic.chev {
    width: 13px;
    height: 13px;
}

.ic.dim { color: #8c8c8c; }
.ic.dim2 { color: #6a6a6a; }
.ic.end { margin-left: auto; }

/* window */
.window {
    position: absolute;
    left: 73px;
    top: 49px;
    width: 3949px;
    height: 2188px;
    display: flex;
    flex-direction: column;
    background: #181818;
    border-radius: 12px;
    overflow: hidden;
    border-bottom: 2px solid #555;
    box-sizing: border-box;
}

body::before {
    content: "";
    position: absolute;
    left: 73px;
    top: 49px;
    width: 3949px;
    height: 2188px;
    border-radius: 12px;
    box-shadow: 0 28px 62px rgba(0, 0, 0, 0.62);
}

.titlebar {
    height: 37px;
    flex: none;
    position: relative;
    display: flex;
    align-items: center;
    background: #41403c;
    border-bottom: 1px solid #111;
    box-sizing: border-box;
    padding-left: 11px;
}

.light {
    width: 16px;
    height: 16px;
    border-radius: 50%;
    margin-right: 10.500px;
}

.light.red { background: #ec6a5e; }
.light.yellow { background: #f4bf4f; }
.light.green { background: #61c554; }

.title {
    position: absolute;
    left: 0;
    right: 0;
    display: flex;
    justify-content: center;
    align-items: center;
    gap: 7px;
    font-size: 18px;
    font-weight: 600;
    color: #c9c9c6;
}

.doc {
    width: 12px;
    height: 17px;
    background: #b0b0ae;
    border-radius: 1px;
}

.topbar {
    height: 47px;
    flex: none;
    display: flex;
    align-items: center;
    background: #171717;
    box-sizing: border-box;
    position: relative;
}

.logo {
    width: 27px;
    height: 27px;
    margin-left: 17px;
    margin-top: -4px;
}

.main-menu {
    display: flex;
    gap: 28px;
    margin-left: 16px;
    margin-top: -3px;
    color: #e0e0e0;
}

.tabs {
    position: absolute;
    left: 441px;
    bottom: 4px;
    display: flex;
    height: 34px;
    font-size: 18.3px;
}

.tab {
    display: flex;
    align-items: center;
    padding: 0 18px;
    color: #a5a5a5;
    background: #1d1d1d;
    border-radius: 7px 7px 0 0;
}

.tab.active {
    background: #303030;
    color: #fff;
}

.tab.add {
    background: none;
    font-size: 22px;
}

.scene-pickers {
    margin-left: auto;
    margin-right: 13px;
    margin-top: -7px;
    display: flex;
    gap: 9px;
}

/* shared widgets */
.b {
    display: flex;
    align-items: center;
    justify-content: center;
    flex: none;
    height: 32px;
    box-sizing: border-box;
    background: #282828;
    border: 1.5px solid #3c3c3c;
    border-radius: 7px;
    gap: 1px;
    color: #e2e2e2;
}

.b.tgl { background: #545454; }
.b.faded { opacity: 0.5; }

.b.drop {
    justify-content: flex-start;
    gap: 14px;
    padding: 0 6px;
}

.b.plain { padding-left: 12px; }
.b.plain2 { padding-left: 14px; }

.g {
    display: flex;
    flex: none;
    height: 32px;
    box-sizing: border-box;
    border: 1.5px solid #3c3c3c;
    border-radius: 7px;
    overflow: hidden;
}

.c {
    display: flex;
    align-items: center;
    justify-content: center;
    flex: none;
    gap: 6px;
    box-sizing: border-box;
    background: #545454;
    border-right: 1px solid #3f3f3f;
    color: #e2e2e2;
}

.c:last-child { border-right: 0; }
.c.on { background: #4c70ad; }
.c.d { background: #282828; gap: 1px; }

.c.grow,
.grow {
    flex: 1;
    min-width: 0;
}

.field {
    flex: 1;
    min-width: 0;
    display: flex;
    align-items: center;
    position: relative;
    background: #1c1c1c;
    padding-left: 13px;
    color: #e2e2e2;
}

.field.tight { padding-left: 9px; }

.pin-r {
    position: absolute;
    right: 7px;
}

.input {
    display: flex;
    align-items: center;
    flex: none;
    height: 32px;
    box-sizing: border-box;
    background: #1b1b1b;
    border: 1.5px solid #3c3c3c;
    border-radius: 7px;
    padding-left: 14px;
    color: #e2e2e2;
}

.input.grow { flex: 1; }
.input.search { gap: 8px; padding-left: 7px; }
.ph { color: #6c6c6c; }

.tall { height: 42px; }

.menu {
    display: flex;
    gap: 29.500px;
    color: #dcdcdc;
}

.w32 { width: 32px; }
.w33 { width: 33px; }
.w35 { width: 35px; }
.w42 { width: 42px; }
.w48 { width: 48px; }
.w52 { width: 52px; }
.w53 { width: 53px; }
.w65 { width: 65px; }
.w66 { width: 66px; }
.w83 { width: 83px; }
.w85 { width: 85px; }
.w86 { width: 86px; }
.w104 { width: 104px; }
.w109 { width: 109px; }
.w113 { width: 113px; }
.w133 { width: 133px; }
.w136 { width: 136px; }
.w153 { width: 153px; }
.w158 { width: 158px; }
.w161 { width: 161px; }
.w168 { width: 168px; }
.w171 { width: 171px; }
.w184 { width: 184px; }
.w196 { width: 196px; }
.w251 { width: 251px; }
.w253 { width: 253px; }
.w289 { width: 289px; }
.w319 { width: 319px; }
.w320 { width: 320px; }
.w347 { width: 347px; }

.ml2 { margin-left: 2px; }
.ml8 { margin-left: 8px; }
.ml9 { margin-left: 9px; }
.ml10 { margin-left: 10px; }
.ml11 { margin-left: 11px; }
.ml14 { margin-left: 14px; }
.ml15 { margin-left: 15px; }
.ml16 { margin-left: 16px; }
.ml18 { margin-left: 18px; }
.ml97 { margin-left: 97px; }
.ml154 { margin-left: 154px; }
.ml179 { margin-left: 179px; }
.ml195 { margin-left: 195px; }
.ml294 { margin-left: 294px; }
.ml470 { margin-left: 470px; }
.ml504 { margin-left: 504px; }
.ml610 { margin-left: 610px; }
.ml871 { margin-left: 871px; }

/* areas */
.areas {
    flex: 1;
    min-height: 0;
    display: grid;
    grid-template-columns: 598px 2657px 681px;
    grid-template-rows: 1042px 1023px;
    column-gap: 6px;
    row-gap: 4px;
    padding-left: 1px;
    background: #131313;
    align-content: start;
}

.area {
    position: relative;
    overflow: hidden;
    border-radius: 8px;
}

.edge-l,
.edge-r {
    position: absolute;
    width: 16px;
    height: 20px;
    color: #7f7f7f;
}

.edge-l { left: 1px; }
.edge-r { right: 1px; }

.fb-edge { top: 68px; }
.vp-edge { top: 105px; }
.ie-edge { top: 112px; }
.ne-edge { top: 70px; }

/* file browser */
.files {
    background: #282828;
}

.fb-head {
    height: 158px;
    box-sizing: border-box;
    padding: 6px 12px 0 14px;
    background: #2f2f2f;
}

.fb-row {
    display: flex;
    align-items: center;
    margin-bottom: 5px;
}

.fb-row:first-child { height: 32px; margin-bottom: 18px; }

.fb-menu { margin-left: 21px; }

.folders {
    display: grid;
    grid-template-columns: repeat(3, 147px);
    grid-auto-rows: 164.800px;
    padding: 43px 0 0 1.500px;
}

.folder {
    position: relative;
    display: flex;
    flex-direction: column;
    align-items: center;
    color: #dcdcdc;
}

.folder span {
    margin-top: 36px;
    line-height: 24px;
    white-space: nowrap;
}

.fld {
    width: 80px;
    height: 60px;
    flex: none;
}

.mark {
    position: absolute;
    left: 62px;
    top: 28px;
    color: #8f7d4c;
}

.mark.corner {
    left: 34px;
    top: 42px;
    width: 14px;
    height: 14px;
}

.vscroll {
    position: absolute;
    right: 3px;
    top: 300px;
    bottom: 0;
    width: 4px;
    background: #3a3a3a;
}

/* viewport */
.viewport {
    background-color: #2e2e2e;
    background-image:
        linear-gradient(#464646 1.5px, transparent 1.5px),
        linear-gradient(90deg, #464646 1.5px, transparent 1.5px),
        repeating-conic-gradient(#2a2a2a 0 25%, #323232 0 50%);
    background-size: 38.550px 38.550px, 38.550px 38.550px, 26px 26px;
    background-position: 0 26px, 13px 0, 0 0;
    grid-row: 1;
    grid-column: 2;
}

.vp-axis-x {
    position: absolute;
    left: 0;
    right: 0;
    top: 488px;
    height: 2px;
    background: #7d3d44;
}

.vp-axis-y {
    position: absolute;
    left: 1327px;
    top: 0;
    bottom: 0;
    width: 2px;
    background: #4c5a3e;
}

.plane {
    position: absolute;
    left: 942px;
    top: 103px;
    width: 771px;
    height: 771px;
    box-sizing: border-box;
    background: #70727f;
    border: 2.500px solid #eb9e3f;
}

.cursor3d {
    position: absolute;
    left: 1303px;
    top: 464px;
    width: 50px;
    height: 50px;
}

.vp-row {
    position: relative;
    display: flex;
    align-items: center;
    height: 44px;
    padding-left: 12px;
}

.vp-row.first {
    height: 43px;
}

.vp-menu {
    margin-left: 21px;
    width: 283px;
    flex: none;
}

.pause {
    background-color: #545454;
    background-image: linear-gradient(90deg, transparent 11px, #e2e2e2 11px 13px, transparent 13px 17px, #e2e2e2 17px 19px, transparent 19px);
    background-size: 100% 22px;
    background-position: 0 50%;
    background-repeat: no-repeat;
}

.stray {
    display: grid;
    flex: none;
    grid-template-columns: repeat(5, 33.300px) 10px repeat(5, 33.300px);
    grid-template-rows: 22px 22px;
    width: 343px;
    height: 44px;
    margin-top: 2px;
}

.stray .ic {
    width: 33px;
    height: 22px;
    color: #d8d8d8;
}

.stray-block {
    grid-column: 1 / span 2;
    display: flex;
    gap: 1px;
    height: 22px;
}

.stray-block i {
    flex: 1;
    background: #4c70ad;
}

.stray-block .minus {
    background-image: linear-gradient(#e6e6e6 0 0);
    background-size: 12px 3px;
    background-position: center 9px;
    background-repeat: no-repeat;
    background-color: #4c70ad;
}

.gapx { grid-column-start: 7; }

.tool-active {
    display: flex;
    align-items: center;
    justify-content: center;
    width: 39px;
    height: 39px;
    box-sizing: border-box;
    margin-left: 10px;
    border: 2px dashed #e8a33a;
}

.tool-active .ic { width: 28px; height: 28px; }

.prism {
    width: 21px;
    height: 32px;
    margin-left: 8px;
    background: linear-gradient(90deg, #3c8bd6, #59b863 50%, #d4603d);
    clip-path: polygon(50% 0, 100% 22%, 100% 78%, 50% 100%, 0 78%, 0 22%);
}

.vp-search {
    flex: none;
    width: 835px;
    margin-left: 3px;
}

.vp-info {
    position: absolute;
    left: 15px;
    top: 98px;
    line-height: 30px;
    color: #f0f0f0;
    text-shadow: 0 1px 2px #000;
}

.gizmo {
    position: absolute;
    left: 2480px;
    top: 90px;
    width: 180px;
    height: 170px;
}

.giz-t {
    font: 700 17px Inter, sans-serif;
    text-anchor: middle;
}

.nav {
    position: absolute;
    display: flex;
    align-items: center;
    justify-content: center;
    width: 47px;
    height: 47px;
    border-radius: 50%;
    background: rgba(32, 32, 32, 0.55);
}

.nav .ic { width: 28px; height: 28px; }
.n1 { left: 2597px; top: 240px; }
.n2 { left: 2597px; top: 292px; }
.n3 { left: 2597px; top: 343px; }
.n4 { left: 2597px; top: 394px; }

/* outliner */
.side {
    grid-row: 1 / span 2;
    grid-column: 3;
    display: flex;
    flex-direction: column;
    gap: 4px;
}

.outliner {
    height: 364px;
    flex: none;
    background: #2c2c2c;
}

.ol-head {
    display: flex;
    align-items: center;
    height: 43px;
    padding-left: 13px;
    box-sizing: border-box;
    background: #2c2c2c;
}

.ol-row {
    position: relative;
    display: flex;
    align-items: center;
    height: 33.500px;
    background: #2b2b2b;
}

.ol-row.alt { background: #2e2e2e; }
.ol-row.sel { background: #344b7a; }

.ol-txt {
    margin-left: 10px;
    color: #dcdcdc;
    white-space: nowrap;
}

.ol-txt.t73 { margin-left: 8px; }
.ol-txt.off { color: #8a8a8a; }
.ol-txt.t11 { margin-left: 11px; }
.ol-txt.pl { margin-left: 8px; color: #f2ab4a; }

.ol-act {
    display: flex;
    align-items: center;
    justify-content: center;
    width: 32px;
    height: 32px;
    box-sizing: border-box;
    background: rgba(255, 255, 255, 0.14);
    border: 1.5px solid rgba(255, 255, 255, 0.22);
    border-radius: 7px;
}

.ol-root { margin-left: 33px; }
.ol-plane { margin-left: 8px; }
.ol-i72 { margin-left: 72px; }
.ol-chev { margin-left: 41px; width: 16px; height: 16px; }
.ol-i13 { margin-left: 15px; }
.gray { color: #8a8a8a; }

.ol-line {
    position: absolute;
    left: 47px;
    top: 4px;
    bottom: 4px;
    width: 1px;
    background: #5a5a5a;
}

.ol-chev2 { margin-left: 75px; width: 16px; height: 16px; }
.ol-emp { margin-left: 13px; color: #b57a3c; }
.ol-book { margin-left: 17px; color: #7b7b7b; }

.ol-kid {
    position: relative;
    margin-left: 13px;
}

.ol-kid em {
    position: absolute;
    left: 3px;
    top: 12px;
    font-style: normal;
    font-size: 14.5px;
    color: #d6d6d6;
}

.brown { color: #86602f; }

.ol-lamp { margin-left: 8px; }
.ol-chev3 { margin-left: 42px; width: 16px; height: 16px; color: #c6c6c6; }
.orange { color: #c98f54; }
.teal { color: #45c2a0; }
.ol-md { margin-left: 40px; }

.ol-end {
    margin-left: auto;
    display: flex;
    align-items: center;
    gap: 9px;
    padding-right: 22px;
}

.ol-end .ck { width: 20px; height: 20px; }
.dimeye { color: #9a9a9a; }

/* properties */
.props {
    flex: 1;
    background: #303030;
    display: flex;
    flex-direction: column;
}

.pr-head {
    display: flex;
    align-items: center;
    height: 43px;
    flex: none;
    padding: 0 0 6px 13px;
    box-sizing: border-box;
    background: #303030;
}

.pr-body {
    flex: 1;
    display: flex;
    min-height: 0;
}

.pr-tabs {
    width: 48px;
    flex: none;
    background: #1d1d1d;
    padding-top: 12px;
    box-sizing: border-box;
}

.ptab {
    display: flex;
    align-items: center;
    justify-content: center;
    height: 46.800px;
}

.ptab.sep { margin-top: 13px; }

.ptab.active {
    background: #303030;
    margin-left: 6px;
    border-radius: 7px 0 0 7px;
}

.ptab .ic { margin-left: 1px; }
.gr { color: #b7b7b7; }
.redd { color: #b45c5f; }
.org { color: #c98f54; }
.blu { color: #5a80c8; }

.pr-main {
    flex: 1;
    min-width: 0;
    padding: 0 13px 0 13px;
}

.crumbs {
    display: flex;
    align-items: center;
    height: 58px;
    padding-left: 5px;
    gap: 16px;
}

.crumb-chev {
    width: 16px;
    height: 16px;
    color: #c0c0c0;
    margin: 0 -2px 0 14px;
}

.crumb-pin { margin-left: auto; margin-right: 4px; }

.world-sel {
    margin: 16px 0 17px;
}

.panel {
    display: flex;
    align-items: center;
    height: 41.300px;
    margin-bottom: 3.400px;
    padding-right: 12px;
    background: #3c3c3c;
    border-radius: 7px;
    color: #dcdcdc;
    box-sizing: border-box;
}

.panel.open {
    display: block;
    height: 201.600px;
    padding: 0;
}

.panel-h {
    display: flex;
    align-items: center;
    height: 41.300px;
    padding-right: 12px;
}

.pchev {
    width: 16px;
    height: 16px;
    margin: 0 7px 0 14px;
    color: #c4c4c4;
}

.grip {
    margin-left: auto;
    width: 18px;
    height: 9px;
    background-image: radial-gradient(circle, #bdbdbd 1.1px, transparent 1.3px);
    background-size: 4.5px 4.5px;
    margin-top: -3px;
}

.prop {
    position: relative;
    display: grid;
    grid-template-columns: 225px 318px 1fr;
    column-gap: 16px;
    align-items: center;
    height: 32px;
}

.p1 { margin-top: 13.700px; }
.p2 { margin-top: 27.600px; }
.p3 { margin-top: 9.100px; }

.prop label {
    grid-column: 1;
    text-align: right;
    color: #c9c9c9;
}

.pchev2 {
    position: absolute;
    left: 23px;
    width: 16px;
    height: 16px;
    color: #c4c4c4;
}

.pfield {
    grid-column: 2;
    height: 32px;
    box-sizing: border-box;
    display: flex;
    align-items: center;
    gap: 10px;
    padding-left: 12px;
    background: #232323;
    border-radius: 6px;
    box-shadow: 0 1.5px 0 #2a2a2a;
    white-space: nowrap;
}

.pfield.linked {
    background: #2e3c52;
}

.pfield.num {
    background: #545454;
    padding: 0;
    gap: 0;
    overflow: hidden;
}

.num-dot {
    display: flex;
    align-items: center;
    justify-content: center;
    width: 32px;
    height: 32px;
    background: #232323;
}

.num-val {
    flex: 1;
    text-align: center;
}

.dot {
    width: 13px;
    height: 13px;
    border-radius: 50%;
    border: 1.5px solid #111;
    flex: none;
}

.dot.green,
.sock.green { background: #78c06e; }
.dot.yellow,
.sock.yellow { background: #c7c729; }
.dot.gray,
.sock.gray { background: #a1a1a1; }
.sock.violet { background: #6363c7; }

.anim {
    grid-column: 3;
    margin-left: -2px;
    width: 7px;
    height: 7px;
    border-radius: 50%;
    background: #dcdcdc;
}

/* image editor */
.image-ed {
    background: #323232;
    grid-row: 2;
    grid-column: 1;
    display: flex;
    flex-direction: column;
}

.ed-head {
    display: flex;
    align-items: center;
    flex: none;
    height: 42px;
    padding-left: 14px;
    box-sizing: border-box;
}

.ie-burger { margin-left: 13px; width: 20px; height: 22px; }
.ie-new { margin-left: 35px; }

.ie-blue {
    margin-left: 31px;
    width: 32px;
    height: 32px;
    border-radius: 7px 0 0 7px;
}

.ie-canvas {
    flex: 1;
    display: flex;
    align-items: center;
    justify-content: center;
    padding-top: 44px;
}

.ie-grid {
    width: 170px;
    height: 170px;
    background-color: #383838;
    background-image:
        linear-gradient(#434343 1px, transparent 1px),
        linear-gradient(90deg, #434343 1px, transparent 1px);
    background-size: 17px 17px;
    border: 1px solid #404040;
}

.ie-n1 { left: 539px; top: 101px; }
.ie-n2 { left: 539px; top: 153px; }

/* node editor */
.nodes {
    background-color: #1c1c1c;
    background-image: radial-gradient(circle, #2a2a2a 1.2px, transparent 1.5px);
    background-size: 36px 36px;
    grid-row: 2;
    grid-column: 2;
}

.nodes .ed-head {
    position: relative;
    background: #212121;
    padding-left: 11px;
    z-index: 2;
}

.ne-menu {
    margin-left: 23px;
    width: 283px;
    flex: none;
}

.use-nodes {
    display: flex;
    align-items: center;
    gap: 7px;
    width: 507px;
    flex: none;
}

.ic.box {
    width: 19px;
    height: 19px;
    color: #4c70ad;
}

.ne-crumbs {
    position: relative;
    z-index: 2;
    display: flex;
    align-items: center;
    gap: 14px;
    height: 32px;
    padding-left: 30px;
    margin-top: 22px;
}

.links {
    position: absolute;
    left: 0;
    top: 0;
}

.node {
    position: absolute;
    background: #2e2e2e;
    border-radius: 7px;
    box-shadow: 0 0 0 1.5px #111, 0 8px 16px rgba(0, 0, 0, 0.42);
    text-shadow: 0 1px 2px rgba(0, 0, 0, 0.7);
    font-size: 19.5px;
}

.n-image { left: -72.500px; top: 293px; width: 429px; height: 699px; }
.n-separate { left: 526.500px; top: 641px; width: 249.500px; height: 206px; }
.n-combine { left: 920px; top: 665px; width: 250px; height: 206px; }
.n-vdisp { left: 1354px; top: 669.500px; width: 250px; height: 249.500px; }
.n-principled { left: 1562px; top: 51px; width: 429px; height: 535px; }
.n-output { left: 2266px; top: 490px; width: 250px; height: 204px; }

.nh {
    display: flex;
    align-items: center;
    height: 34px;
    gap: 6px;
    padding-left: 20px;
    border-radius: 7px 7px 0 0;
    border-bottom: 1px solid rgba(0, 0, 0, 0.25);
    box-sizing: border-box;
    font-size: 20.3px;
    white-space: nowrap;
}

.nchev { width: 17px; height: 17px; color: #dcdcdc; }

.brown-h { background: #744a25; padding-left: 21px; }
.brown-h .nchev { margin-right: 3px; }
.blue-h { background: #33607f; }
.indigo-h { background: #393b7a; }
.green-h { background: #3b6133; }
.wine-h { background: #3a1f25; }

.nb {
    display: flex;
    flex-direction: column;
    padding: 3.700px 18px 0 19px;
}

.nb.small { padding: 3.700px 17px 0 17px; }

.nr,
.ns,
.nd,
.np {
    display: flex;
    align-items: center;
    height: 33.500px;
    flex: none;
    margin-top: 5.850px;
    box-sizing: border-box;
    white-space: nowrap;
}

.nr.end { justify-content: flex-end; }

.sock {
    position: absolute;
    width: 16px;
    height: 16px;
    border-radius: 50%;
    border: 1.5px solid #111;
    box-sizing: border-box;
}

.sock.l { left: -8px; }
.sock.r { right: -8px; }

.ns {
    justify-content: space-between;
    padding: 0 24px 0 27px;
    background: #545454;
    border-bottom: 1.5px solid #3f3f3f;
}

.ns.solo {
    border-radius: 7px;
    border: 1.5px solid #262626;
}

.ns.half {
    background: linear-gradient(90deg, #4c70ad 50%, #545454 50%);
}

.ns.full { background: #4c70ad; }
.ns b { font-weight: 400; }

.nd {
    padding: 0 6px 0 14px;
    background: #282828;
    border: 1.5px solid #3c3c3c;
    border-radius: 7px;
}

.nr-g { height: 34px; }
.mt2 { margin-top: 2px; }
.mt6 { margin-top: 6px; }
.mt9 { margin-top: 10.500px; }
.mt10 { margin-top: 10px; }
.mt13 { margin-top: 13.600px; }
.mt14 { margin-top: 14.500px; }
.pad6 { padding-left: 6px; }
.pad11 { padding-left: 11px; }
.pad23 { padding-left: 23px; }
.pad33 { padding-left: 33px; }

.stack {
    display: flex;
    flex-direction: column;
    border-radius: 7px;
    overflow: hidden;
}

.stack .ns {
    height: 35px;
    margin-top: 0;
    padding-left: 35px;
}

.space-row {
    position: relative;
    display: flex;
    justify-content: flex-end;
    align-items: center;
}

.space-row label {
    position: absolute;
    right: 279px;
    white-space: nowrap;
}

.nd.w253 {
    margin-top: 0;
    flex: none;
}

.swatch {
    margin-left: auto;
    width: 227px;
    height: 33px;
    background: #e6e6e6;
    border-radius: 6px;
}

.np {
    height: 35.200px;
    margin-top: 0;
    padding-left: 24px;
    position: relative;
}

.np.first { margin-top: 1.300px; }

.nchev2 {
    position: absolute;
    left: 0;
    width: 17px;
    height: 17px;
    color: #c8c8c8;
}

.hscroll {
    position: absolute;
    left: 595px;
    right: 9px;
    bottom: 3px;
    height: 4.500px;
    background: #343434;
    border-radius: 2px;
}

.first-d { margin-top: 2.300px; }

/* status bar */
.statusbar {
    position: relative;
    flex: none;
    height: 33px;
    padding-top: 3px;
    box-sizing: border-box;
    display: flex;
    align-items: center;
    background: #181818;
    color: #a8a8a8;
}

.st {
    position: absolute;
    display: flex;
    align-items: center;
    gap: 17px;
}

.st .ic { width: 22px; height: 22px; color: #a8a8a8; }
.st1 { left: 18px; }
.st2 { left: 385px; }
.st3 { left: 755px; }

.st-info {
    margin-left: auto;
    margin-right: 22px;
    white-space: nowrap;
    word-spacing: 3px;
}
```
